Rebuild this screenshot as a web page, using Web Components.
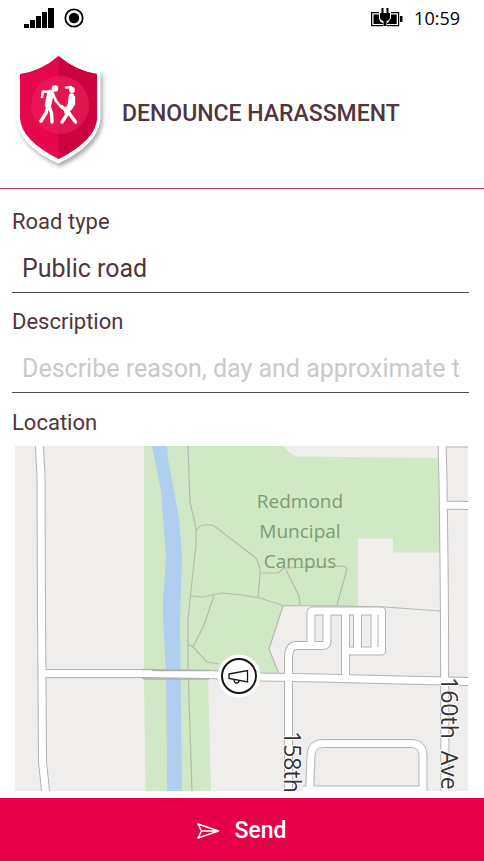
<!DOCTYPE html>
<html lang="en">
<head>
<meta charset="utf-8">
<meta name="viewport" content="width=device-width, initial-scale=1">
<title>Denounce harassment</title>
<style>
  html, body { height: 100%; margin: 0; }
  body { background: #fff; color: #50363c; font-family: Roboto, "Liberation Sans", sans-serif; font-size: 22px; }
</style>
</head>
<body>
<report-app></report-app>
<script>
const define = (name, html, setup) => customElements.define(name, class extends HTMLElement {
  constructor() {
    super();
    this.attachShadow({ mode: 'open' }).innerHTML = html;
  }
  connectedCallback() { if (setup) setup(this, this.shadowRoot); }
});

define('status-bar', `
<style>
  :host { display: flex; align-items: center; justify-content: space-between; height: 36px; padding: 0 24px; color: #000; }
  div { display: flex; align-items: center; gap: 10px; }
  svg { display: block; }
  time { font: 18px/36px "Open Sans", sans-serif; }
</style>
<div>
  <svg width="30" height="22" viewBox="0 0 30 22" aria-label="Signal"><path d="M0 17h5v4H0zM6 13h5v8H6zM12 9h5v12h-5zM18 5h5v16h-5zM24 1h6v20h-6z"/></svg>
  <svg width="20" height="20" viewBox="0 0 20 20" aria-label="Recording"><circle cx="10" cy="10" r="8.7" fill="none" stroke="#000" stroke-width="1.8"/><circle cx="10" cy="10" r="5.2"/></svg>
</div>
<div>
  <svg width="34" height="22" viewBox="0 0 34 22" aria-label="Charging"><path d="M1.600 5.600h27v13h-27z" fill="#fff" stroke="#000" stroke-width="1.2"/><path d="M30 9h2.500v6H30zM3.500 7.500H9v4q1 4 4 4.500v1H3.500zM26.700 7.500H20v4q-1 4-3 4.500v1h9.700z"/><path d="M9 4h12v7q-1 3-4 3.500V20h-4v-5.500q-3-.5-4-3.500z" fill="#fff"/><path d="M10 6h10v5q-1 3-3.500 3V19h-3v-5Q11 14 10 11zM11.500 1h2v5h-2zM16.500 1h2v5h-2z"/></svg>
  <time>10:59</time>
</div>`);

define('shield-logo', `
<style>:host { display: block; flex: none; } svg { display: block; filter: drop-shadow(2px 3px 2px #0005); }</style>
<svg width="90" height="116" viewBox="14 51 90 116" aria-label="Shield">
  <path d="M58 54Q76 68 99 72V119Q96 144 58 162Q20 144 18 119V72Q40 68 58 54z" fill="#fff" stroke="#fff" stroke-width="3" stroke-linejoin="round"/>
  <path d="M58.500 56Q76 71 97 74V118Q96 140 58.500 159Q21 140 20 118V74Q41 71 58.500 56z" fill="#e5064c"/>
  <path d="M58.500 56Q76 71 97 74V118Q96 140 58.500 159z" fill="#cb0440"/>
  <circle cx="60" cy="105" r="29" fill="#e91d54" opacity=".72"/>
  <g fill="none" stroke="#fff" stroke-linecap="round" stroke-linejoin="round">
    <path d="M50 92L43 91.500L42 97" stroke-width="2.600"/>
    <path d="M50.500 93L48 105" stroke-width="6.500"/>
    <path d="M48 106L46 113L41 121M49 106L51.500 113L52 122" stroke-width="3.400"/>
    <path d="M53 94L56 101L62 108L66 108" stroke-width="2.600"/>
    <path d="M71.500 96L70.500 104L67 112" stroke-width="5.500"/>
    <path d="M74 97L74 104L71 109M66 112L62 106" stroke-width="2.400"/>
    <path d="M68 113L62 122M69 113L75.500 122" stroke-width="3.400"/>
    <path d="M66 87.500l5 -.5" stroke-width="2.400"/>
  </g>
  <circle cx="55" cy="88.500" r="3.300" fill="#fff"/><circle cx="72" cy="90" r="2.900" fill="#fff"/>
</svg>`);

define('app-header', `
<style>
  :host { display: flex; align-items: flex-start; gap: 18px; padding: 15px 14px 21px; border-bottom: 1px solid #b63557; }
  h1 { margin: 49px 0 0; font-size: 23px; line-height: 28px; font-weight: 500; }
</style>
<shield-logo></shield-logo><h1><slot></slot></h1>`);

const fieldCss = `
  :host { display: block; }
  label { display: block; padding-top: 1px; font-size: 22px; line-height: 28px; }
  select, input { display: block; box-sizing: border-box; width: 100%; height: 42px; margin: 15px 0 0; padding: 0 10px 6px; border: 0; border-bottom: 1px solid #574b4f; border-radius: 0; outline: 0; background: none; color: inherit; font: 25px/35px Roboto, sans-serif; appearance: none; }
  input::placeholder { color: #c9c9c9; opacity: 1; }
`;
define('select-field', `<style>${fieldCss}</style><label for="c"></label><select id="c"></select>`, (el, root) => {
  root.querySelector('label').textContent = el.getAttribute('label');
  root.querySelector('select').replaceChildren(new Option(el.getAttribute('value')));
});
define('text-field', `<style>${fieldCss}</style><label for="c"></label><input id="c" type="text">`, (el, root) => {
  root.querySelector('label').textContent = el.getAttribute('label');
  root.querySelector('input').placeholder = el.getAttribute('placeholder');
});

define('map-marker', `
<style>
  :host { display: block; }
  button { display: block; padding: 0; border: 0; background: none; }
  svg { display: block; }
</style>
<button type="button" aria-label="Reported place"><svg width="44" height="44" viewBox="0 0 44 44"><circle cx="22" cy="22" r="21.500" fill="#fff"/><circle cx="22" cy="22" r="17" fill="#fff" stroke="#151515" stroke-width="2"/><path d="M12 20L30.500 16.500V28L12 24.500zM17 25.500q0 3.500 2.500 3.500t2.500-2.500" fill="none" stroke="#151515" stroke-width="1.300"/></svg></button>`);

define('area-map', `
<style>
  :host { display: block; position: relative; overflow: hidden; background: #efeeed; }
  svg { display: block; width: 100%; height: 100%; }
  map-marker { position: absolute; left: 49.500%; top: 66.700%; transform: translate(-50%, -50%); }
  .trail { fill: none; stroke: #b5b9b0; stroke-width: 1.200; }
  text { font-family: "Open Sans", "Noto Sans", sans-serif; }
  .area { font-size: 19px; fill: #7f9a74; text-anchor: middle; }
  .street { font-size: 23px; fill: #333; stroke: #fff; stroke-width: 2; paint-order: stroke; }
</style>
<svg viewBox="15 446 453 345" preserveAspectRatio="xMidYMid slice">
  <defs>
    <g id="roads" fill="none" stroke-linejoin="round">
      <path d="M39 440L41 475L41.500 620L42 677L42.500 762L46 795"/>
      <path d="M42 673.500L145 673.500L208 674.500L262 677L320 678L400 680L470 681.500"/>
      <path d="M288.500 795V657Q289 646 296 645.500H323Q327 645 327 641V611"/>
      <path d="M311 645V613Q311 611 313 611H381.500V651H345.500"/>
      <path d="M345.500 611V678M357.500 611V651"/>
      <path d="M375 611V651"/>
      <path d="M442 440L443 480L444 560L444.500 620L445 795M444 505L470 505.500M444 443H470"/>
      <path d="M309.500 795L311 757Q311 743.500 323 743.500H411Q423 743.500 423 757V795M303 790H421"/>
    </g>
  </defs>
  <path d="M144 446H284Q290 455 297 456.500L440 458V552.500H393V538.500H358V606H283L269 649L279 675H208L211 791H145.500L144 677z" fill="#d0e8c6"/>
  <path d="M152 446L161 491L166 558L163 600L163 620L166 670L167 791H182L180 620L182 556L179 518L168 459L167 446z" fill="#b0cff0"/>
  <path class="trail" d="M188 446L190 502L196 528L196 545L191 590L188 620L188 660L189 700L192 791M196 531Q200 525 203 525H213L256 558Q261 568 260 575L258 597M191 596L203 597L222 593L242 595L260 598L283 605.500L342 606L385 607L440 611M214 596L204 625L193 647M188 644L193 647L207 662L219 664M261 573H278L284 568L344 566L347 569L337 605M286 570L299 596L300 605M283 606L269 649L279 674"/>
  <use href="#roads" stroke="#b4b2b1" stroke-width="9"/>
  <use href="#roads" stroke="#fff" stroke-width="7"/>
  <path d="M142 669.500H153V670.500H209M142 677.500L145 679H209" fill="none" stroke="#acb2a7" stroke-width="1.500"/>
  <path d="M378 615V647" stroke="#b4b2b1"/>
  <text class="area" x="300" y="508">Redmond</text>
  <text class="area" x="300" y="538">Muncipal</text>
  <text class="area" x="300" y="568">Campus</text>
  <text class="street" transform="translate(284 731) rotate(90)">158th</text>
  <text class="street" transform="translate(441 677) rotate(90)" xml:space="preserve">160th  Ave</text>
</svg>
<map-marker></map-marker>`);

define('send-bar', `
<style>
  :host { display: block; }
  button { display: flex; align-items: center; justify-content: center; gap: 14px; width: 100%; height: 63px; padding: 3px 0 0; border: 0; background: #e60049; color: #fff; font: 500 23px/28px Roboto, sans-serif; }
  svg { display: block; }
</style>
<button type="button"><svg width="23" height="16" viewBox="0 0 23 16" fill="none" stroke="#fff" stroke-width="1.500" stroke-linejoin="round"><path d="M1 1L21.500 8L1 15L4.500 8zM4.500 8H21"/></svg><slot></slot></button>`);

define('report-app', `
<style>
  :host { display: flex; flex-direction: column; min-height: 100%; }
  main { flex: 1; display: flex; flex-direction: column; padding: 18px 15px 7px 12px; }
  text-field { margin-top: 14px; }
  h2 { margin: 16px 0 9px; font-size: 22px; line-height: 28px; font-weight: 400; }
  area-map { flex: 1 0 345px; margin: 0 1px 0 3px; }
</style>
<status-bar></status-bar>
<app-header>DENOUNCE HARASSMENT</app-header>
<main>
  <select-field label="Road type" value="Public road"></select-field>
  <text-field label="Description" placeholder="Describe reason, day and approximate time"></text-field>
  <h2>Location</h2>
  <area-map></area-map>
</main>
<send-bar>Send</send-bar>`);
</script>
</body>
</html>
